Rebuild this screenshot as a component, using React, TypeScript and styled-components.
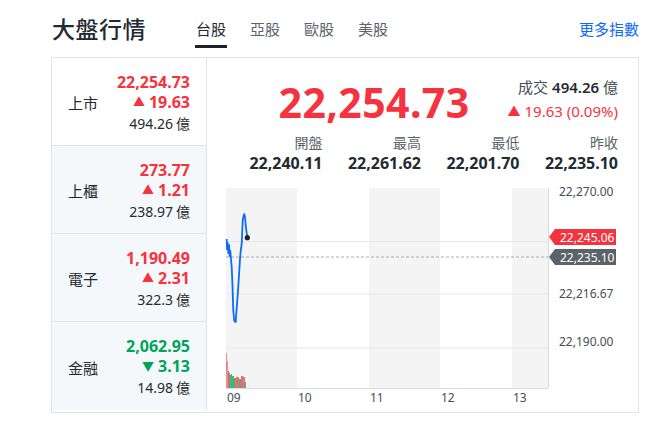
import styled, { createGlobalStyle } from 'styled-components'

const GlobalStyle = createGlobalStyle`
	body {
		margin: 0;
		background: #fff;
		font-family: 'Noto Sans', 'Noto Sans CJK TC', sans-serif;
		color: #232a31;
	}
`

const RED = '#f5333f'
const GREEN = '#00a35c'

const Page = styled.div`
	width: 650px;
	padding: 0 11px 0 51px;
	box-sizing: border-box;
`

const Header = styled.div`
	display: flex;
	align-items: center;
	height: 57px;
`

const Title = styled.h1`
	margin: 0 0 0 1px;
	font-size: 23px;
	font-weight: 500;
	letter-spacing: 0.5px;
	width: 144px;
	padding-bottom: 1px;
`

const Tabs = styled.div`
	display: flex;
	gap: 24px;
	flex: 1;
	height: 100%;
`

const Tab = styled.div<{ $active?: boolean }>`
	position: relative;
	display: flex;
	align-items: center;
	font-size: 15px;
	color: ${p => (p.$active ? '#232a31' : '#5b636a')};
	padding-bottom: 1px;

	&::after {
		content: '';
		display: ${p => (p.$active ? 'block' : 'none')};
		position: absolute;
		left: -1px;
		right: -1px;
		bottom: 9px;
		height: 3px;
		background: #1d2228;
	}
`

const MoreLink = styled.a`
	font-size: 15px;
	color: #0f69ff;
	text-decoration: none;
	padding-bottom: 1px;
`

const Card = styled.div`
	display: grid;
	grid-template-columns: 155px minmax(0, 1fr);
	border: 1px solid #e0e4e9;
	height: 356px;
	box-sizing: border-box;
`

const SideList = styled.div`
	display: flex;
	flex-direction: column;
	border-right: 1px solid #e0e4e9;
	height: 352px;
`

const SideRow = styled.div<{ $active?: boolean }>`
	flex: 0 0 88px;
	box-sizing: border-box;
	display: flex;
	align-items: center;
	justify-content: space-between;
	padding: 0 16px 0 16px;
	background: ${p => (p.$active ? '#fff' : '#f5f8fa')};
	border-bottom: 1px solid #e0e4e9;

	&:last-child {
		border-bottom: none;
	}
`

const RowName = styled.div`
	font-size: 15px;
	padding-top: 2px;
`

const RowValues = styled.div`
	display: flex;
	flex-direction: column;
	align-items: flex-end;
	line-height: 20px;
	padding-top: 2px;
`

const Price = styled.div<{ $up: boolean }>`
	font-size: 16px;
	font-weight: 700;
	color: ${p => (p.$up ? RED : GREEN)};
`

const Arrow = styled.span<{ $size?: number }>`
	font-size: ${p => p.$size ?? 12}px;
	margin-right: 4px;
	position: relative;
	top: -1px;
`

const Volume = styled.div`
	font-size: 14px;
	color: #232a31;
`

const Unit = styled.span`
	margin-left: 3px;
	font-size: 14px;
`

const Main = styled.div`
	display: flex;
	flex-direction: column;
	min-width: 0;
`

const QuoteRow = styled.div`
	display: flex;
	justify-content: flex-end;
	align-items: center;
	height: 74px;
	gap: 38px;
	padding-right: 20px;
`

const BigPrice = styled.div`
	font-size: 41px;
	font-weight: 700;
	color: ${RED};
	letter-spacing: 0.4px;
	padding-top: 14px;
`

const Summary = styled.div`
	display: flex;
	flex-direction: column;
	align-items: flex-end;
	line-height: 24px;
	padding-top: 8px;
`

const SummaryLine = styled.div`
	font-size: 15px;
	color: #464e56;
`

const Strong = styled.span`
	font-weight: 600;
	color: #232a31;
	margin-left: 4px;
`

const Change = styled.div`
	font-size: 15px;
	color: ${RED};
`

const Stats = styled.div`
	display: grid;
	grid-template-columns: repeat(4, 98.5px);
	justify-content: end;
	line-height: 20px;
	padding: 1px 20px 0 0;
`

const Stat = styled.div`
	display: flex;
	flex-direction: column;
	align-items: flex-end;
`

const StatLabel = styled.div`
	font-size: 14px;
	color: #5b636a;
`

const StatValue = styled.div`
	font-size: 16px;
	font-weight: 700;
`

const ChartBox = styled.div`
	margin-top: 8px;
	height: 230px;
`

const side = [
	{ name: '上市', price: '22,254.73', change: '19.63', vol: '494.26', up: true },
	{ name: '上櫃', price: '273.77', change: '1.21', vol: '238.97', up: true },
	{ name: '電子', price: '1,190.49', change: '2.31', vol: '322.3', up: true },
	{ name: '金融', price: '2,062.95', change: '3.13', vol: '14.98', up: false },
]

const stats = [
	{ label: '開盤', value: '22,240.11' },
	{ label: '最高', value: '22,261.62' },
	{ label: '最低', value: '22,201.70' },
	{ label: '昨收', value: '22,235.10' },
]

const linePts: [number, number][] = [
	[19.7, 58], [20, 68], [20.7, 62], [21.3, 72], [22, 64], [22.7, 75], [23.3, 70], [24, 78],
	[24.7, 86], [25.5, 105], [26.3, 130], [27.3, 140], [28.7, 141], [29.3, 132], [31, 110],
	[33, 78], [33.7, 70], [34.7, 63], [35.7, 40], [36.5, 35], [37.3, 33], [38, 36], [39, 47], [40.3, 56.7],
]

// [x, top, colour]
const bars: [number, number, string][] = [
	[19.5, 172, '#f08a8e'], [20.5, 180, '#f08a8e'], [21.5, 190, '#b07a6e'], [22.5, 192, '#b07a6e'],
	[23.5, 194, '#3cb878'], [24.5, 193, '#3cb878'], [25.5, 195, '#3cb878'], [26.5, 195, '#3cb878'],
	[27.5, 197, '#3cb878'], [28.5, 197, '#f06a72'], [29.5, 196, '#f06a72'], [30.5, 196, '#f06a72'],
	[31.5, 196, '#f06a72'], [32.5, 198, '#3cb878'], [33.5, 198, '#3cb878'], [34.5, 195, '#f06a72'],
	[35.5, 195, '#f06a72'], [36.5, 196, '#f06a72'], [37.5, 196, '#f06a72'], [38.5, 201, '#3cb878'],
]

const Chart = () => {
	const cols = [
		{ x: 19, w: 71, fill: '#f4f4f5' },
		{ x: 90, w: 72, fill: '#fff' },
		{ x: 162, w: 71, fill: '#f4f4f5' },
		{ x: 233, w: 72, fill: '#fff' },
		{ x: 305, w: 36, fill: '#f4f4f5' },
	]
	const hours = [
		{ x: 20, t: '09' },
		{ x: 91, t: '10' },
		{ x: 163, t: '11' },
		{ x: 234, t: '12' },
		{ x: 306, t: '13' },
	]
	const yLabels = [
		{ y: 15, t: '22,270.00' },
		{ y: 117, t: '22,216.67' },
		{ y: 165, t: '22,190.00' },
	]
	return (
		<svg width="431" height="230" viewBox="0 0 431 230">
			{cols.map(c => (
				<rect key={c.x} x={c.x} y={7} width={c.w} height={200} fill={c.fill} />
			))}
			{[60.5, 113, 167].map(y => (
				<line key={y} x1={19} x2={341} y1={y} y2={y} stroke="#e6e8eb" strokeWidth="1" />
			))}
			<line x1={19} x2={341} y1={76} y2={76} stroke="#aab0b6" strokeWidth="1" strokeDasharray="3 2" />
			<line x1={341.5} x2={341.5} y1={7} y2={207} stroke="#d8dce3" />
			<line x1={19} x2={341.5} y1={207.5} y2={207.5} stroke="#d8dce3" />
			{bars.map(([x, top, c]) => (
				<rect key={x} x={x - 0.5} y={top} width={1} height={207 - top} fill={c} />
			))}
			<polyline
				points={linePts.map(p => p.join(',')).join(' ')}
				fill="none"
				stroke="#0f69ff"
				strokeWidth="1.8"
				strokeLinejoin="round"
			/>
			<circle cx={40.3} cy={56.7} r={2.6} fill="#1d2228" />
			{yLabels.map(l => (
				<text key={l.t} x={352} y={l.y} fontSize="12" fill="#464e56" fontFamily="'Noto Sans', sans-serif">
					{l.t}
				</text>
			))}
			<path d="M342 56 L348 48 H409 V64 H348 Z" fill={RED} />
			<text x={353} y={60.5} fontSize="12" fill="#fff" fontFamily="'Noto Sans', sans-serif">
				22,245.06
			</text>
			<path d="M342 76 L348 68 H409 V84 H348 Z" fill="#5b636a" />
			<text x={353} y={80.5} fontSize="12" fill="#fff" fontFamily="'Noto Sans', sans-serif">
				22,235.10
			</text>
			{hours.map(h => (
				<text key={h.t} x={h.x} y={221} fontSize="12" fill="#464e56" fontFamily="'Noto Sans', sans-serif">
					{h.t}
				</text>
			))}
		</svg>
	)
}

export default function App() {
	return (
		<>
			<GlobalStyle />
			<Page>
				<Header>
					<Title>大盤行情</Title>
					<Tabs>
						<Tab $active>台股</Tab>
						<Tab>亞股</Tab>
						<Tab>歐股</Tab>
						<Tab>美股</Tab>
					</Tabs>
					<MoreLink href="#">更多指數</MoreLink>
				</Header>
				<Card>
					<SideList>
						{side.map((r, i) => (
							<SideRow key={r.name} $active={i === 0}>
								<RowName>{r.name}</RowName>
								<RowValues>
									<Price $up={r.up}>{r.price}</Price>
									<Price $up={r.up}>
										<Arrow>{r.up ? '▲' : '▼'}</Arrow>
										{r.change}
									</Price>
									<Volume>
										{r.vol}
										<Unit>億</Unit>
									</Volume>
								</RowValues>
							</SideRow>
						))}
					</SideList>
					<Main>
						<QuoteRow>
							<BigPrice>22,254.73</BigPrice>
							<Summary>
								<SummaryLine>
									成交<Strong>494.26</Strong> 億
								</SummaryLine>
								<Change>
									<Arrow $size={13}>▲</Arrow>19.63 (0.09%)
								</Change>
							</Summary>
						</QuoteRow>
						<Stats>
							{stats.map(s => (
								<Stat key={s.label}>
									<StatLabel>{s.label}</StatLabel>
									<StatValue>{s.value}</StatValue>
								</Stat>
							))}
						</Stats>
						<ChartBox>
							<Chart />
						</ChartBox>
					</Main>
				</Card>
			</Page>
		</>
	)
}
